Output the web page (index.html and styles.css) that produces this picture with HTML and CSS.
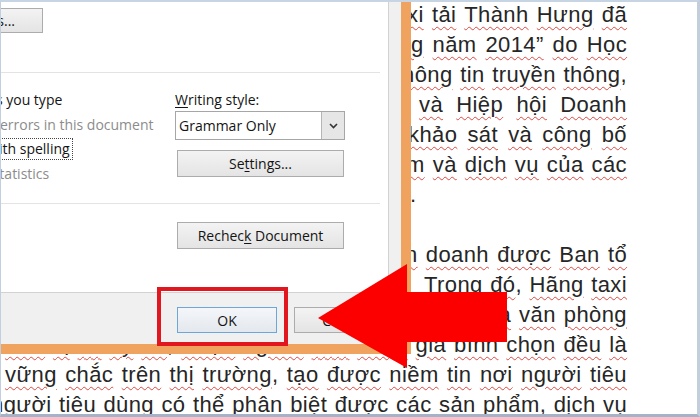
FILE: index.html
```html
<!DOCTYPE html>
<html lang="vi">
<head>
<meta charset="utf-8">
<title>Proofing options</title>
<link rel="stylesheet" href="styles.css">
</head>
<body>
<div class="screen">
  <div class="doc">
    <p class="ln l1"><u>xi</u> <u>tải</u> <u>Thành</u> <u>Hưng</u> <u>đã</u></p>
    <p class="ln l2"><u>g</u> <u>năm</u> <u>2014”</u> <u>do</u> <u>Học</u></p>
    <p class="ln l3"><u>hông</u> <u>tin</u> <u>truyền</u> <u>thông</u>,</p>
    <p class="ln l4"><u>và</u> <u>Hiệp</u> <u>hội</u> <u>Doanh</u></p>
    <p class="ln l5"><u>khảo</u> <u>sát</u> <u>và</u> <u>công</u> <u>bố</u></p>
    <p class="ln l6"><u>m</u> <u>và</u> <u>dịch</u> <u>vụ</u> <u>của</u> <u>các</u></p>
    <p class="ln l7">.</p>
    <p class="ln l8">&nbsp;</p>
    <p class="ln l9"><u>n</u> <u>doanh</u> <u>được</u> <u>Ban</u> <u>tổ</u></p>
    <p class="ln l10"><u>Trong</u> <u>đó</u>, <u>Hãng</u> <u>taxi</u></p>
    <p class="ln l11"><u>và</u> <u>văn</u> <u>phòng</u></p>
    <p class="ln l12"><u>đơn</u> <u>vị</u> <u>có</u> <u>uy</u> <u>tín</u>, <u>được</u> <u>người</u> <u>dân</u> <u>tham</u> <u>gia</u> <u>bình</u> <u>chọn</u> <u>đều</u> <u>là</u></p>
    <p class="ln l13"><u>vững</u> <u>chắc</u> <u>trên</u> <u>thị</u> <u>trường</u>, <u>tạo</u> <u>được</u> <u>niềm</u> <u>tin</u> <u>nơi</u> <u>người</u> <u>tiêu</u></p>
    <p class="ln l14"><u>người</u> <u>tiêu</u> <u>dùng</u> <u>có</u> <u>thể</u> <u>phân</u> <u>biệt</u> <u>được</u> <u>các</u> <u>sản</u> <u>phẩm</u>, <u>dịch</u> <u>vụ</u></p>
  </div>

  <div class="dlg">
    <div class="panel">
      <div class="toprow"><button class="btn dict">Custom Dictionaries...</button></div>
      <div class="rule first"></div>
      <div class="cols">
        <div class="checks">
          <div class="chk"><span class="box"></span>Check grammar as you type</div>
          <div class="chk dis"><span class="box"></span>Hide grammatical errors in this document</div>
          <div class="chk"><span class="box"></span><span class="focus">Check grammar with spelling</span></div>
          <div class="chk dis"><span class="box"></span>Show readability statistics</div>
        </div>
        <div class="style">
          <div class="lbl"><u>W</u>riting style:</div>
          <div class="combo">
            <span class="val">Grammar Only</span>
            <span class="drop"><svg width="9" height="6" viewBox="0 0 9 6"><polyline points="1,1 4.5,4.5 8,1" fill="none" stroke="#333" stroke-width="1.6"/></svg></span>
          </div>
          <button class="btn wide">Se<u>t</u>tings...</button>
        </div>
      </div>
      <div class="rule second"></div>
      <div class="recheck">
        <span></span>
        <button class="btn wide">Rechec<u>k</u> Document</button>
      </div>
    </div>
    <div class="footer">
      <button class="btn ok">OK</button>
      <button class="btn">Cancel</button>
    </div>
  </div>

  <div class="highlight"></div>
  <svg class="arrow" width="189" height="104" viewBox="0 0 189 104"><polygon points="0,54 89,0 89,28 189,28 189,78 89,78 89,104" fill="#fc0000"/></svg>
</div>
</body>
</html>
```
FILE: styles.css
```css
* { box-sizing: border-box; }
body { margin: 0; background: #fff; }

.screen {
  position: relative;
  width: 700px;
  height: 417px;
  overflow: hidden;
  background: #fff;
}
.screen::after {
  content: "";
  position: absolute;
  inset: 0;
  border-top: 2px solid #c6d4e4;
  border-left: 1px solid #c2cfde;
  border-right: 3px solid #c3cedc;
  border-bottom: 3px solid #a4b3c8;
  pointer-events: none;
}

/* document */
.doc {
  width: 627px;
  font: 22px/30px "Liberation Sans", Arial, sans-serif;
  letter-spacing: 0.4px;
  color: #262626;
}
.ln {
  margin: 0;
  height: 30px;
  text-align: justify;
  text-align-last: justify;
}
.doc u {
  text-decoration: underline wavy #e0463f;
  text-decoration-thickness: 1px;
  text-underline-offset: 4px;
}
.l1 { padding-left: 407px; }
.l2 { padding-left: 411px; }
.l3 { padding-left: 402px; }
.l4 { padding-left: 419px; }
.l5 { padding-left: 408px; }
.l6 { padding-left: 406px; }
.l7 { padding-left: 410px; }
.l9 { padding-left: 405px; }
.l10 { padding-left: 424px; }
.l11 { padding-left: 487px; }
.l12 { padding-left: 5px; }
.l13 { padding-left: 5px; }
.l14 { margin-left: -9px; }

/* dialog */
.dlg {
  position: absolute;
  left: -260px;
  top: -30px;
  width: 671px;
  height: 384px;
  display: flex;
  flex-direction: column;
  background: #f0f0f0;
  border-right: 10px solid #efa35f;
  border-bottom: 10px solid #efa35f;
  font: 14px "Open Sans", "Noto Sans", sans-serif;
  color: #141414;
}
.panel {
  height: 323px;
  margin-right: 12px;
  background: #fff;
  border-right: 1px solid #d2d2d2;
  border-bottom: 1px solid #d2d2d2;
  padding: 38px 8px 0 20px;
  display: flex;
  flex-direction: column;
}
.btn {
  font: inherit;
  color: #141414;
  background: linear-gradient(#f3f3f3, #e4e4e4);
  border: 1px solid #acacac;
  border-radius: 0;
  padding: 0;
  margin: 0;
  height: 27px;
}
.btn u { text-decoration: underline; text-underline-offset: 2px; }
.toprow {
  display: flex;
  justify-content: flex-end;
  margin-right: 337px;
  height: 25px;
}
.dict { height: 25px; padding: 0 27px 0 21px; white-space: nowrap; flex: none; }
.rule { height: 1px; background: #e3e3e3; }
.rule.first { margin-top: 39px; }
.rule.second { margin-top: 17px; }

.cols {
  margin-top: 15px;
  margin-right: 35px;
  display: grid;
  grid-template-columns: 1fr 170px;
}
.checks { padding-left: 102px; }
.chk {
  height: 24.5px;
  line-height: 24.5px;
  display: flex;
  align-items: center;
  white-space: nowrap;
}
.chk.dis { color: #8c8c8c; }
.box {
  width: 13px;
  height: 13px;
  margin-right: 6px;
  border: 1px solid #707070;
  background: #fff;
  flex: none;
}
.focus {
  outline: 1px dotted #444;
  outline-offset: 0;
  line-height: 20px;
  padding: 0 2px 0 0;
}

.lbl { height: 24px; line-height: 24px; }
.lbl u { text-decoration: underline; text-underline-offset: 2px; }
.combo {
  margin-top: -1px;
  height: 29px;
  display: flex;
  border: 1px solid #a6a6a6;
  background: #fff;
}
.val { flex: 1; padding-left: 3px; line-height: 27px; }
.drop {
  width: 23px;
  background: #e6e6e6;
  border-left: 1px solid #b5b5b5;
  display: flex;
  align-items: center;
  justify-content: center;
}
.wide {
  display: block;
  width: 167px;
  margin: 10px 1px 0 2px;
}

.recheck {
  margin-top: 18px;
  margin-right: 35px;
  display: grid;
  grid-template-columns: 1fr 170px;
}
.recheck .wide { margin-top: 0; }

.footer {
  flex: 1;
  display: flex;
  justify-content: flex-end;
  align-items: flex-start;
  gap: 17px;
  padding: 14px 7px 0 0;
}
.footer .btn { width: 100px; height: 26px; }
.footer .ok {
  border-color: #6ea6da;
  background: linear-gradient(#f4f6f9, #e3e8ee);
}

/* annotations */
.highlight {
  position: absolute;
  left: 157px;
  top: 287px;
  width: 131px;
  height: 59px;
  border: 4px solid #e2161f;
}
.arrow {
  position: absolute;
  left: 318px;
  top: 264px;
}
```
